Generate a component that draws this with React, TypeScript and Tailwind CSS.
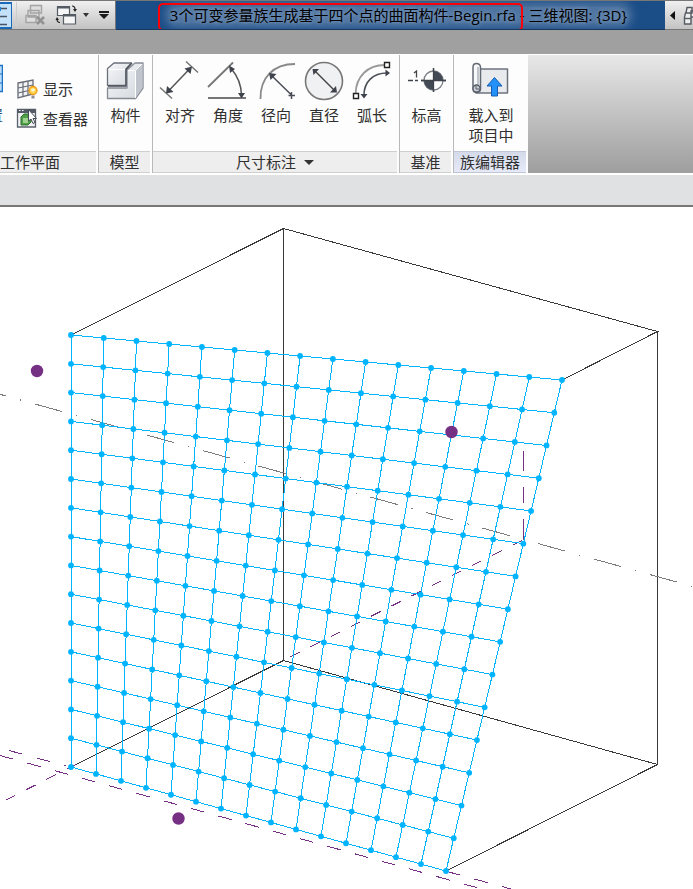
import React from "react";

type Point = { x: number; y: number };

const CELLS = 15;
const CORNERS = {
  tl: { x: 71, y: 335 },
  tr: { x: 562, y: 380 },
  bl: { x: 71, y: 767 },
  br: { x: 446, y: 871 },
};

/* Bilinear position on the four-point surface. */
function surfacePoint(u: number, v: number): Point {
  const { tl, tr, bl, br } = CORNERS;
  return {
    x: (1 - v) * ((1 - u) * tl.x + u * tr.x) + v * ((1 - u) * bl.x + u * br.x),
    y: (1 - v) * ((1 - u) * tl.y + u * tr.y) + v * ((1 - u) * bl.y + u * br.y),
  };
}

const steps = Array.from({ length: CELLS + 1 }, (_, i) => i / CELLS);

function Viewport() {
  return (
    <svg viewBox="0 207 693 682" className="block w-full" role="img" aria-label="三维视图">
      <g fill="none" stroke="#3a3a3a" strokeWidth="1" shapeRendering="crispEdges">
        <path d="M71 335L283.5 228.5L657.5 331.5L562 380" />
        <path d="M657.5 331.5V764.5L446 871" />
        <path d="M283.5 228.5V660.5L657.5 764.5" />
        <path d="M283.5 660.5L71 767" />
      </g>
      <path d="M-21 388.5L720 594" fill="none" stroke="#7c7c7c" shapeRendering="crispEdges" strokeDasharray="28.5 14.3 1.3 13.9" />
      <g fill="none" stroke="#752f83" strokeWidth="1" shapeRendering="crispEdges">
        <path d="M523.5 451V471M523.5 487V503M523.5 519V539" />
        <path d="M522 540.5L284 660" strokeDasharray="10.6 12" />
        <path d="M76 764.5L0 803" strokeDasharray="10.6 12.2" />
        <path d="M0 755.5L480 888.5" strokeDasharray="13.8 14.5" />
        <path d="M9 750.5L66 766" strokeDasharray="13.8 14.8" />
        <path d="M447 871.5L520 891.5" strokeDasharray="13.8 14.5" />
      </g>
      <g fill="none" stroke="#00b4ff" strokeWidth="1" shapeRendering="crispEdges">
        {steps.map((t) => {
          const l = surfacePoint(0, t);
          const r = surfacePoint(1, t);
          const a = surfacePoint(t, 0);
          const b = surfacePoint(t, 1);
          return (
            <React.Fragment key={t}>
              <line x1={l.x} y1={l.y} x2={r.x} y2={r.y} />
              <line x1={a.x} y1={a.y} x2={b.x} y2={b.y} />
            </React.Fragment>
          );
        })}
      </g>
      <g fill="#00b4ff">
        {steps.map((v) =>
          steps.map((u) => {
            const p = surfacePoint(u, v);
            return <circle key={`${u}-${v}`} cx={p.x} cy={p.y} r="2.9" />;
          }),
        )}
      </g>
      <g fill="#752f83">
        <circle cx="37" cy="371" r="6.2" />
        <circle cx="451.5" cy="432" r="6.2" />
        <circle cx="178.5" cy="818.5" r="6.2" />
      </g>
    </svg>
  );
}

function ComponentIcon() {
  return (
    <svg viewBox="101 58 48 44" className="h-11 w-12" strokeLinejoin="round">
      <defs>
        <linearGradient id="solid" x1="0" y1="0" x2="1" y2="1">
          <stop offset="0" stopColor="#f7f8fa" />
          <stop offset="1" stopColor="#d3d7dd" />
        </linearGradient>
      </defs>
      <path d="M106.500 88H126V70L134 63H142V88L134.500 98.500H106.500Z" fill="url(#solid)" stroke="#858a93" strokeWidth="1.300" />
      <path d="M134.500 98L141.500 88V63.500L134.500 70Z" fill="#bfc4cd" />
      <path d="M127 70.500H134.500V98M134.500 70.500L141 64" fill="none" stroke="#fff" />
      <path d="M106.500 68.500L113 63H130.500L125 69V85.500H106.500Z" fill="url(#solid)" stroke="#6b707a" strokeWidth="1.300" />
      <path d="M107.500 69.500H124" stroke="#fff" />
      <path d="M107 86H125V69.500L131 63" fill="none" stroke="#4d525c" strokeWidth="1.300" />
    </svg>
  );
}

function AlignIcon() {
  return (
    <svg viewBox="156 58 48 44" className="h-11 w-12" fill="none">
      <path d="M168 91.500L190 68.500" stroke="#555" strokeWidth="1.500" />
      <path d="M186 61.500L198 72.500M160 87.500L172 98.500" stroke="#777" strokeWidth="1.500" />
      <path d="M192 66.500L190.500 74L184.500 68.500ZM166 93.500L167 86L173.500 92Z" fill="#3f434b" />
    </svg>
  );
}

function AngleIcon() {
  return (
    <svg viewBox="204 58 48 44" className="h-11 w-12" fill="none">
      <path d="M208 87L233 62.500M208 98H246" stroke="#777" strokeWidth="1.800" />
      <path d="M231.500 69Q241 80 241.500 95" stroke="#555" strokeWidth="1.500" />
      <path d="M229 65.500L235 69L230 73ZM241.500 98.500L238 93H245Z" fill="#3f434b" />
    </svg>
  );
}

function RadialIcon() {
  return (
    <svg viewBox="252 58 48 44" className="h-11 w-12" fill="none">
      <path d="M260.500 99C260 78 273 64 295 64" stroke="#888" strokeWidth="1.800" />
      <path d="M272 76L292 95.500M288.500 95.500H295M291.500 92V99" stroke="#4a4e56" strokeWidth="1.500" />
      <path d="M269 73L276.500 74L270.500 80Z" fill="#3f434b" />
    </svg>
  );
}

function DiameterIcon() {
  return (
    <svg viewBox="300 58 48 44" className="h-11 w-12" fill="none">
      <circle cx="324" cy="81" r="18.500" fill="#f0f1f3" stroke="#777" strokeWidth="1.600" />
      <path d="M315 71L334 90" stroke="#444" strokeWidth="1.500" />
      <path d="M312.500 69H319L313.500 75ZM337 92.500H330L336 86Z" fill="#3f434b" />
    </svg>
  );
}

function ArcIcon() {
  return (
    <svg viewBox="348 58 48 44" className="h-11 w-12" fill="none">
      <path d="M355.500 94C356 76 368 65 385 65" stroke="#999" strokeWidth="1.800" />
      <path d="M364 95C364 82 373 73 387 73" stroke="#4a4e56" strokeWidth="1.600" />
      <path d="M390 73L385.500 69.500V76.500ZM364 98.500L360.500 94H367.500Z" fill="#3f434b" />
      <path d="M384.500 62.500H389.500V67.500H384.500ZM353.500 93.500H358.500V98.500H353.500Z" fill="#fff" stroke="#222" strokeWidth="1.400" />
    </svg>
  );
}

function LevelIcon() {
  return (
    <svg viewBox="403 58 48 44" className="h-11 w-12" fill="none">
      <path d="M408 80.500H413M415 80.500H418M421 80.500H446M433.500 68V92" stroke="#3f434b" strokeWidth="1.300" />
      <path d="M414 73L416.500 71V77.500" stroke="#444" strokeWidth="1.300" />
      <circle cx="433.500" cy="80.500" r="9.500" fill="#fff" stroke="#7b7e84" strokeWidth="1.300" />
      <path d="M433.500 80.500V71A9.500 9.500 0 0 1 443 80.500ZM433.500 80.500V90A9.500 9.500 0 0 1 424 80.500Z" fill="#434a55" />
      <path d="M433.500 68V92M421 80.500H446" stroke="#3f434b" strokeWidth="1.300" />
    </svg>
  );
}

function LoadIcon() {
  return (
    <svg viewBox="468 58 48 44" className="h-11 w-12" strokeLinejoin="round">
      <path d="M480 69H508.500V93H477Z" fill="#e8eaee" stroke="#6d737d" strokeWidth="1.500" />
      <path d="M474 67Q474 63.500 477.500 63.500T481.500 67V89Q481.500 92 478 92.500Q474 92.500 474 89Z" fill="#f7f8fa" stroke="#646a75" strokeWidth="1.500" />
      <path d="M479 67V88" stroke="#c0c5cc" strokeWidth="2" />
      <circle cx="477.500" cy="88.500" r="3.500" fill="#ccd0d6" stroke="#555b66" strokeWidth="1.300" />
      <path d="M477 86V89H480" fill="none" stroke="#555b66" />
      <path d="M495.500 77.500L503 86H498.500V96H492.500V86H488Z" fill="#2491f8" stroke="#175db4" />
    </svg>
  );
}

function ShowIcon() {
  return (
    <svg viewBox="16 78 22 22" className="h-[22px] w-[22px] shrink-0" fill="none">
      <path d="M18 83L33 80V94L18 98Z" fill="#f2f3f5" stroke="#666b75" strokeWidth="1.300" />
      <path d="M23 82V97M28 81V95.500M18 88L33 85M18 93L33 89.500" stroke="#666b75" strokeWidth="1.200" />
      <circle cx="33" cy="90.500" r="4" fill="#ffd34e" stroke="#f39a16" strokeWidth="1.300" />
      <circle cx="33" cy="90" r="1.800" fill="#fff7cf" />
      <path d="M31.500 95.500H34.500V98.500H31.500Z" fill="#8b8f96" />
    </svg>
  );
}

function ViewerIcon() {
  return (
    <svg viewBox="16 109 22 22" className="h-[22px] w-[22px] shrink-0" fill="none">
      <path d="M17.500 110.500H35.500V128H17.500Z" fill="#f0f1f3" stroke="#5b616c" strokeWidth="1.300" />
      <path d="M17 110H36V114H17Z" fill="#555b66" />
      <path d="M19 111.500H20.500M22 111.500H23.500" stroke="#fff" />
      <path d="M21 118L24 115H31V123L28 126H21Z" fill="#4f9e46" stroke="#2f6c31" />
      <path d="M23 119H28V124H23Z" fill="#9bd28d" />
      <path d="M28.500 110.500V122L31 120L33 124.500L35 123.500L33 119.500H36.500Z" fill="#fff" stroke="#454b57" />
    </svg>
  );
}

function SettingIcon() {
  return (
    <svg viewBox="-29 58 32 44" className="h-11 w-8 shrink-0" fill="none">
      <path d="M-20 65.500H2.500V91.500H-20Z" fill="#b9dcfa" stroke="#1b72c4" strokeWidth="1.500" />
      <path d="M-20 74H2M-20 83H2M-6 66V91" stroke="#1b72c4" />
    </svg>
  );
}

function Tool({ icon, lines }: { icon: React.ReactNode; lines: string[] }) {
  return (
    <button type="button" className="flex w-12 flex-col items-center gap-[3px] whitespace-nowrap">
      {icon}
      <span className="flex flex-col items-center">
        {lines.map((line) => (
          <span key={line}>{line}</span>
        ))}
      </span>
    </button>
  );
}

function Panel({
  title,
  width,
  align = "justify-center",
  tint = "border-[#cfcfcf] bg-[#eeeeee]",
  last = false,
  children,
}: {
  title: React.ReactNode;
  width: string;
  align?: string;
  tint?: string;
  last?: boolean;
  children: React.ReactNode;
}) {
  return (
    <section className={`flex shrink-0 flex-col bg-[#fdfdfd] ${width} ${last ? "" : "border-r border-[#b9b9b9]"}`}>
      <div className={`flex flex-1 pt-[3px] ${align}`}>{children}</div>
      <div className={`mr-0.5 flex h-[22px] items-center border-y ${align} ${tint}`}>{title}</div>
    </section>
  );
}

function TitleBar() {
  return (
    <header className="flex h-[30px] border-t border-[#777777]">
      <div className="flex w-[116px] shrink-0 items-center border-r border-b border-[#777777] bg-linear-to-b from-[#f0f0f0] to-[#c3c3c3]">
        <button type="button" aria-label="属性" className="h-[27px] w-3 overflow-hidden border-y-2 border-r border-[#1c69b7] bg-[#c4e1fa]">
          <svg viewBox="0 0 11 23" className="h-[23px] w-[11px]">
            <path d="M0 4.500H7M0 12.500H7M0 20.500H7" stroke="#4a5563" strokeWidth="1.500" />
            <path d="M0 3V7" stroke="#1686e8" strokeWidth="2" />
          </svg>
        </button>
        <span className="ml-1 h-[26px] w-px bg-[#cdcdcd]" />
        <button type="button" aria-label="关闭隐藏窗口" className="ml-2">
          <svg viewBox="26 4 22 22" className="h-[22px] w-[22px]" fill="#dedede" stroke="#a4a4a4" strokeWidth="1.400">
            <path d="M31.500 5.500H42.500V13H31.500ZM29 10.500H40V17H29ZM27 15.500H37V22.500H27Z" />
            <path d="M38 17L45 24M45 17L38 24" stroke="#929292" strokeWidth="2.600" />
          </svg>
        </button>
        <button type="button" aria-label="切换窗口" className="ml-2 flex items-center gap-1.5">
          <svg viewBox="55 4 22 22" className="h-[22px] w-[22px]" fill="#f6f6f6" stroke="#555b63" strokeWidth="1.200">
            <path d="M57.500 6.500H69.500V15.500H57.500ZM63.500 14.500H75.500V24H63.500Z" />
            <path d="M57 7.500H70M63 15.500H76" strokeWidth="2" />
            <path d="M72 6Q75 6 75 9.500M57 19Q57 22.500 60 22.500" fill="none" stroke="#222" />
            <path d="M75 12L73 9H77ZM57 17L55.500 20H59Z" fill="#222" stroke="none" />
          </svg>
          <svg viewBox="0 0 6 4" className="h-1 w-1.5">
            <path d="M0 0H6L3 4Z" fill="#333" />
          </svg>
        </button>
        <button type="button" aria-label="自定义快速访问工具栏" className="ml-2.5">
          <svg viewBox="0 0 10 8" className="h-2 w-2.5">
            <path d="M0 0H10V2H0ZM0 3H10L5 8Z" fill="#1a1a1a" />
          </svg>
        </button>
      </div>
      <div className="relative flex min-w-0 flex-1 items-center justify-center overflow-hidden border-b border-[#16375e] bg-[#1b4d87] pl-4">
        <h1 className="rounded-full bg-[#6f8db1]/60 text-[15px] leading-4 whitespace-nowrap text-black shadow-[0_0_10px_5px_rgba(111,141,177,0.6)] [text-shadow:0_0_5px_rgba(190,205,225,0.7)]">
          3个可变参量族生成基于四个点的曲面构件-Begin.rfa - 三维视图: {"{3D}"}
        </h1>
        <span className="absolute top-[2px] left-[42px] h-7 w-[365px] rounded-[5px] border-2 border-[#fb0208]" />
      </div>
      <div className="flex w-7 shrink-0 items-center gap-2 overflow-hidden border-b border-[#777777] bg-linear-to-b from-[#f0f0f0] to-[#c3c3c3] pl-[5px]">
        <svg viewBox="0 0 5 9" className="h-[9px] w-[5px] shrink-0">
          <path d="M5 0V9L0 4.500Z" fill="#111" />
        </svg>
        <svg viewBox="684 5 20 21" className="h-[21px] w-5 shrink-0" fill="#eee" stroke="#555b63" strokeWidth="1.400">
          <path d="M688 7.500H693V13H687ZM686.500 13H692V24H685.500V17ZM697 7.500H701V13H697ZM692 11H697V17H692Z" />
          <path d="M686 18.500H692" />
        </svg>
      </div>
    </header>
  );
}

export default function App() {
  return (
    <div className="min-h-screen overflow-hidden bg-white font-['Open_Sans','Noto_Sans_CJK_SC',sans-serif] text-[15px] leading-5 text-[#303030]">
      <TitleBar />
      <div className="h-6 bg-[#a0a0a0]" />
      <nav className="flex h-[119px] border-t border-white">
        <Panel title="工作平面" width="w-[99px]" align="justify-start">
          <div className="flex w-[3px] justify-end overflow-hidden">
            <button type="button" className="flex shrink-0 flex-col items-end gap-[3px] text-[#1b4b7c]">
              <SettingIcon />
              设置
            </button>
          </div>
          <div className="flex flex-col gap-2 pt-5 pl-[13px] whitespace-nowrap">
            <button type="button" className="flex h-[22px] items-center gap-[5px]">
              <ShowIcon />
              显示
            </button>
            <button type="button" className="flex h-[22px] items-center gap-[5px]">
              <ViewerIcon />
              查看器
            </button>
          </div>
        </Panel>
        <Panel title="模型" width="w-[54px]">
          <Tool icon={<ComponentIcon />} lines={["构件"]} />
        </Panel>
        <Panel
          width="w-[247px]"
          title={
            <button type="button" className="flex items-center gap-2">
              尺寸标注
              <svg viewBox="0 0 10 5" className="h-[5px] w-2.5">
                <path d="M0 0H10L5 5Z" fill="#333" />
              </svg>
            </button>
          }
        >
          <Tool icon={<AlignIcon />} lines={["对齐"]} />
          <Tool icon={<AngleIcon />} lines={["角度"]} />
          <Tool icon={<RadialIcon />} lines={["径向"]} />
          <Tool icon={<DiameterIcon />} lines={["直径"]} />
          <Tool icon={<ArcIcon />} lines={["弧长"]} />
        </Panel>
        <Panel title="基准" width="w-[54px]">
          <Tool icon={<LevelIcon />} lines={["标高"]} />
        </Panel>
        <Panel title="族编辑器" width="w-[74px]" tint="border-[#bfc5d6] bg-linear-to-b from-[#d5daea] to-[#e6eaf8]" last>
          <Tool icon={<LoadIcon />} lines={["载入到", "项目中"]} />
        </Panel>
        <div className="flex-1 bg-linear-to-b from-[#e8e8e8] to-[#9e9e9e]" />
      </nav>
      <div className="h-[34px] border-t-2 border-b-2 border-t-white border-b-[#777777] bg-[#e0e1e3]" />
      <main>
        <Viewport />
      </main>
    </div>
  );
}
